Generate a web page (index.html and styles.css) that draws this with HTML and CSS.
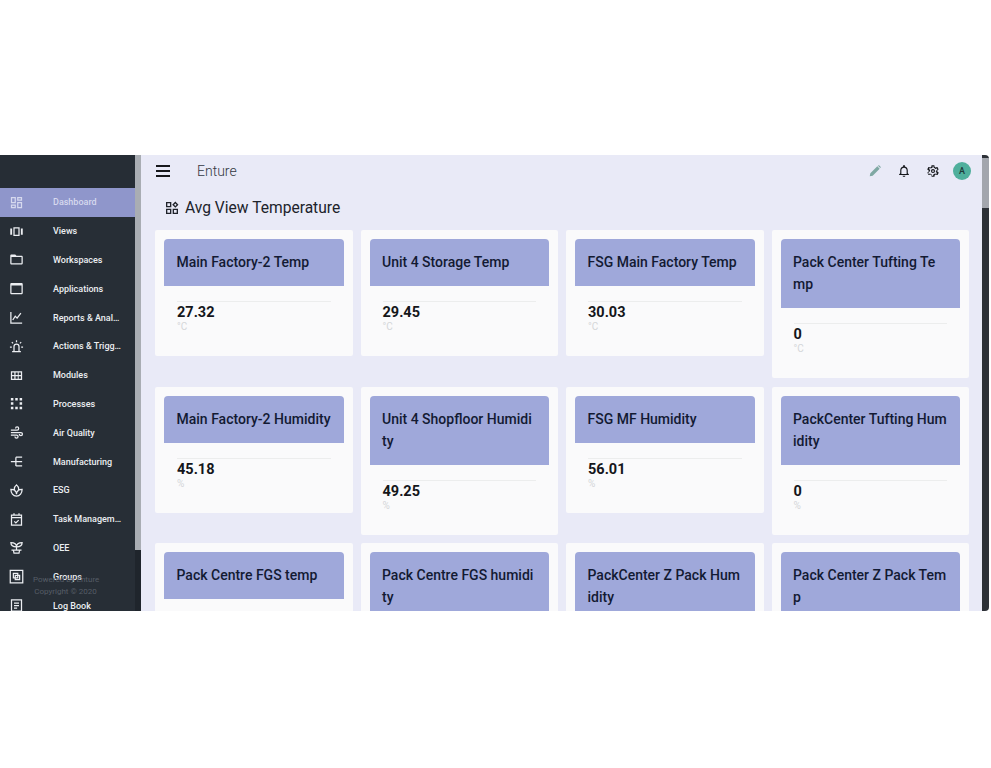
FILE: index.html
```html
<!DOCTYPE html>
<html lang="en">
<head>
<meta charset="utf-8">
<title>Enture</title>
<link rel="stylesheet" href="styles.css">
</head>
<body>
<div class="frame">
  <aside class="sidebar">
    <nav class="nav">
      <div class="nav-head"></div>
      <a class="nav-item active"><svg class="ico fill" viewBox="0 0 24 24"><path d="M19 5v2h-4V5h4M9 5v6H5V5h4m10 8v6h-4v-6h4M9 17v2H5v-2h4M21 3h-8v6h8V3zM11 3H3v10h8V3zm10 8h-8v10h8V11zm-10 4H3v6h8v-6z"/></svg><span>Dashboard</span></a>
      <a class="nav-item"><svg class="ico fill" viewBox="0 0 24 24"><path fill-rule="evenodd" d="M2 7h3v10H2zM19 7h3v10h-3zM7 5h10v14H7zm2 2v10h6V7z"/></svg><span>Views</span></a>
      <a class="nav-item"><svg class="ico fill" viewBox="0 0 24 24"><path d="M20 6h-8l-2-2H4c-1.100 0-1.990.900-1.990 2L2 18c0 1.100.900 2 2 2h16c1.100 0 2-.900 2-2V8c0-1.100-.900-2-2-2zm0 12H4V8h16v10z"/></svg><span>Workspaces</span></a>
      <a class="nav-item"><svg class="ico fill" viewBox="0 0 24 24"><path d="M20 3H4c-1.100 0-2 .900-2 2v14c0 1.100.900 2 2 2h16c1.100 0 2-.900 2-2V5c0-1.100-.900-2-2-2zm0 16H4V7h16v12z"/></svg><span>Applications</span></a>
      <a class="nav-item"><svg class="ico line" viewBox="0 0 24 24"><path d="M3 3v18h18M6 16l4-6 3 3 6-8"/></svg><span>Reports &amp; Anal…</span></a>
      <a class="nav-item"><svg class="ico line" viewBox="0 0 24 24"><path d="M8 19v-7a4 4 0 0 1 8 0v7M5 20h14M12 2v3M4.500 5l2 2M19.500 5l-2 2M1.500 13h3M19.500 13h3"/></svg><span>Actions &amp; Trigg…</span></a>
      <a class="nav-item"><svg class="ico fill" viewBox="0 0 24 24"><path d="M3 5v14h18V5H3zm5.500 12H5v-4h3.500v4zm0-6H5V7h3.500v4zm5.500 6h-3.500v-4H14v4zm0-6h-3.500V7H14v4zm5 6h-3.500v-4H19v4zm0-6h-3.500V7H19v4z"/></svg><span>Modules</span></a>
      <a class="nav-item"><svg class="ico fill" viewBox="0 0 24 24"><path d="M3 3h4v4H3zM10 3h4v4h-4zM17 3h4v4h-4zM3 10h4v4H3zM17 10h4v4h-4zM3 17h4v4H3zM10 17h4v4h-4zM17 17h4v4h-4z"/></svg><span>Processes</span></a>
      <a class="nav-item"><svg class="ico line" viewBox="0 0 24 24"><path d="M3 8h10a2.500 2.500 0 1 0-2.500-2.500M3 12h16a2.500 2.500 0 1 1-2.500 2.500M3 16h9a2.500 2.500 0 1 1-2.500 2.500"/></svg><span>Air Quality</span></a>
      <a class="nav-item"><svg class="ico line" viewBox="0 0 24 24"><path d="M3 12h8M11 5v14M11 5h10M11 12h10M11 19h10"/></svg><span>Manufacturing</span></a>
      <a class="nav-item"><svg class="ico line" viewBox="0 0 24 24"><path d="M12 3c2.500 2 3.500 4 3.500 6.500S14 14 12 15c-2-1-3.500-3-3.500-5.500S9.500 5 12 3zM3 10c4 0 9 2 9 8 0-6 5-8 9-8 0 6-3.500 11-9 11s-9-5-9-11z"/></svg><span>ESG</span></a>
      <a class="nav-item"><svg class="ico line" viewBox="0 0 24 24"><path d="M4 5h16v16H4zM4 9h16M8 2v4M16 2v4M8.500 15l2.500 2.500 4.500-4.500"/></svg><span>Task Managem…</span></a>
      <a class="nav-item"><svg class="ico line" viewBox="0 0 24 24"><path d="M12 16v-5M12 11C12 7 9 4 3 4c0 5 3 7 9 7zM12 11c0-4 3-7 9-7 0 5-3 7-9 7zM4 16h16M7 16l1 5h8l1-5"/></svg><span>OEE</span></a>
      <a class="nav-item"><svg class="ico line" viewBox="0 0 24 24"><path d="M2 2h20v20H2zM7 7h7v7H7zM10 10h7v7h-7z"/></svg><span>Groups</span></a>
      <a class="nav-item"><svg class="ico line" viewBox="0 0 24 24"><path d="M4 3h16v18H4zM8 8h8M8 12h8M8 16h5"/></svg><span>Log Book</span></a>
    </nav>
    <div class="side-bar"><div class="side-thumb"></div></div>
    <div class="powered"><div>Powered by Enture</div><div>Copyright © 2020</div></div>
  </aside>
  <main class="main">
    <header class="toolbar">
      <button class="burger" aria-label="menu"><i></i><i></i><i></i></button>
      <span class="brand">Enture</span>
      <div class="tools">
        <svg class="tool pencil" viewBox="0 0 24 24"><path d="M3 21l1-5L16 4l4 4L8 20zM17.500 2.500a1.500 1.500 0 0 1 2 0l2 2a1.500 1.500 0 0 1 0 2L21 7l-4-4z"/></svg>
        <svg class="tool" viewBox="0 0 24 24"><path d="M12 22a2.500 2.500 0 0 0 2.500-2h-5A2.500 2.500 0 0 0 12 22zm6.500-6v-5c0-3.300-2-5.900-5-6.600V3a1.500 1.500 0 0 0-3 0v1.400c-3 .7-5 3.300-5 6.600v5l-2 2v1h17v-1zm-2 1h-9v-6c0-2.500 2-4.500 4.500-4.500s4.500 2 4.500 4.500z"/></svg>
        <svg class="tool" viewBox="0 0 24 24"><path fill-rule="evenodd" d="M19.400 13c.1-.3.100-.7.100-1s0-.7-.1-1l2.100-1.600c.2-.1.200-.4.100-.6l-2-3.500c-.1-.2-.4-.3-.6-.2l-2.500 1c-.5-.4-1.100-.7-1.700-1l-.4-2.600c0-.3-.2-.5-.5-.5h-4c-.3 0-.5.200-.5.400l-.4 2.700c-.6.300-1.200.6-1.700 1l-2.500-1c-.2-.1-.5 0-.6.200l-2 3.500c-.1.200-.1.500.1.600L4.600 11c-.1.300-.1.700-.1 1s0 .7.100 1l-2.100 1.600c-.2.100-.2.400-.1.600l2 3.500c.1.200.4.300.6.200l2.500-1c.5.400 1.100.7 1.700 1l.4 2.600c0 .3.200.5.500.5h4c.3 0 .5-.2.500-.4l.4-2.700c.6-.3 1.200-.6 1.700-1l2.500 1c.2.100.5 0 .6-.2l2-3.500c.1-.2.100-.5-.1-.6zM12 15.500a3.500 3.500 0 1 1 0-7 3.500 3.500 0 0 1 0 7zm0-2a1.500 1.500 0 1 0 0-3 1.500 1.500 0 0 0 0 3zM17 12c0 .4 0 .7-.1 1.200l-.1.700 1.900 1.500-1 1.700-2.300-.9-.6.400c-.6.400-1.100.7-1.700 1l-.6.200-.3 2.400h-2l-.4-2.400-.6-.3c-.6-.2-1.100-.5-1.700-1l-.6-.4-2.300.9-1-1.700 1.900-1.500-.1-.7C7 12.700 7 12.400 7 12s0-.7.100-1.200l.1-.7-1.900-1.500 1-1.700 2.300.9.600-.4c.6-.4 1.100-.7 1.700-1l.6-.2L11 4.300h2l.3 2.400.7.300c.6.200 1.100.5 1.700 1l.6.400 2.300-.9 1 1.700-1.900 1.500.1.700c.2.500.2.800.2 1.200z"/></svg>
        <span class="avatar">A</span>
      </div>
    </header>
    <h1 class="page-title"><svg class="title-ico" viewBox="0 0 24 24"><path d="M3 3h8v8H3zm2 2v4h4V5zM13 13h8v8h-8zm2 2v4h4v-4zM3 13h8v8H3zm2 2v4h4v-4zM17 2.300l4.700 4.700-4.700 4.700L12.300 7zM17 5.100 15.100 7 17 8.900 18.900 7z" fill-rule="evenodd"/></svg>Avg View Temperature</h1>
    <section class="grid">
      <article class="card"><h2>Main Factory-2 Temp</h2><div class="body"><b>27.32</b><small>°C</small></div></article>
      <article class="card"><h2>Unit 4 Storage Temp</h2><div class="body"><b>29.45</b><small>°C</small></div></article>
      <article class="card"><h2>FSG Main Factory Temp</h2><div class="body"><b>30.03</b><small>°C</small></div></article>
      <article class="card"><h2>Pack Center Tufting Temp</h2><div class="body"><b>0</b><small>°C</small></div></article>
      <article class="card"><h2>Main Factory-2 Humidity</h2><div class="body"><b>45.18</b><small>%</small></div></article>
      <article class="card"><h2>Unit 4 Shopfloor Humidity</h2><div class="body"><b>49.25</b><small>%</small></div></article>
      <article class="card"><h2>FSG MF Humidity</h2><div class="body"><b>56.01</b><small>%</small></div></article>
      <article class="card"><h2>PackCenter Tufting Humidity</h2><div class="body"><b>0</b><small>%</small></div></article>
      <article class="card"><h2>Pack Centre FGS temp</h2><div class="body"></div></article>
      <article class="card"><h2>Pack Centre FGS humidity</h2><div class="body"></div></article>
      <article class="card"><h2>PackCenter Z Pack Humidity</h2><div class="body"></div></article>
      <article class="card"><h2>Pack Center Z Pack Temp</h2><div class="body"></div></article>
    </section>
  </main>
  <div class="main-bar"><div class="main-thumb"></div></div>
</div>
</body>
</html>
```
FILE: styles.css
```css
* { box-sizing: border-box; }
html, body { margin: 0; height: 100%; background: #fff; overflow: hidden; }
body { font-family: Roboto, "Liberation Sans", sans-serif; padding-top: 155px; }
.frame {
  position: relative;
  display: flex;
  width: 989px;
  height: 456px;
  overflow: hidden;
  border-radius: 0 4px 4px 0;
}
.sidebar { position: relative; flex: 0 0 141px; display: flex; background: #272e36; overflow: hidden; }
.nav { flex: 0 0 135px; display: flex; flex-direction: column; }
.nav-head { flex: 0 0 33px; background: #262d35; box-shadow: 0 1px 2px rgba(0,0,0,.25); }
.nav-item {
  flex: 0 0 28.8px;
  display: flex;
  align-items: center;
  padding-left: 8.500px;
  color: #eceef2;
  font-size: 9px;
  font-weight: 500;
  white-space: nowrap;
}
.nav-item span { margin-left: 29.500px; }
.nav-item.active { background: #8f96cb; color: #d6d9ee; }
.ico { width: 15px; height: 15px; flex: none; }
.ico.fill { fill: currentColor; }
.ico.line { fill: none; stroke: currentColor; stroke-width: 2; }
.side-bar { flex: 0 0 6px; background: #1f252c; }
.side-thumb { height: 395px; background: #a9adb3; }
.powered {
  position: absolute;
  left: 33px;
  top: 419px;
  width: 65px;
  color: #565d66;
  font-size: 8px;
  line-height: 12px;
  text-align: center;
  white-space: nowrap;
}
.main { flex: 1; min-width: 0; background: #e9eaf7; overflow: hidden; }
.toolbar { display: flex; align-items: center; height: 32px; margin-bottom: 1px; padding: 0 11px 0 15px; }
.burger { display: flex; flex-direction: column; gap: 3px; width: 14px; padding: 0; border: 0; background: none; }
.burger i { display: block; height: 2px; background: #17181c; }
.brand { margin-left: 27px; font-size: 14px; font-weight: 300; color: #333842; }
.tools { margin-left: auto; display: flex; align-items: center; gap: 15px; }
.tool { width: 14px; height: 14px; fill: #15171b; }
.tool.pencil { fill: #7fa8a3; }
.avatar {
  display: flex; align-items: center; justify-content: center;
  width: 18px; height: 18px; margin-left: -2px; border-radius: 50%;
  background: #4faf9c; color: #1d3a38; font-size: 9px; font-weight: 500;
}
.page-title {
  display: flex; align-items: center;
  margin: 0; height: 42px; padding: 0 0 3px 23px;
  font-size: 15.6px; font-weight: 400; color: #20232b;
}
.title-ico { width: 16px; height: 16px; margin-right: 5px; fill: #20232b; }
.grid {
  display: grid;
  grid-template-columns: repeat(4, 197.5px);
  gap: 8.500px 8px;
  align-items: start;
  padding-left: 14px;
}
.card { background: #fafafb; padding: 9px; border-radius: 2px; }
.card h2 {
  margin: 0;
  padding: 12px 13px 13px 12.500px;
  background: #9fa8da;
  border-radius: 4px 4px 0 0;
  color: #131a33;
  font-size: 14px;
  font-weight: 500;
  line-height: 22px;
  word-break: break-all;
}
.body { margin: 15px 13px 0; padding-top: 2px; height: 46px; border-top: 1px solid #eceded; }
.body b { display: block; font-size: 14.5px; font-weight: 700; line-height: 18px; color: #14161a; }
.body small { display: block; margin-top: -1px; font-size: 10px; line-height: 11px; color: #d4d6d9; }
.main-bar { flex: 0 0 7px; background: #2d3137; }
.main-thumb { height: 50px; margin-top: 3px; background: #a3a6ad; }
```
